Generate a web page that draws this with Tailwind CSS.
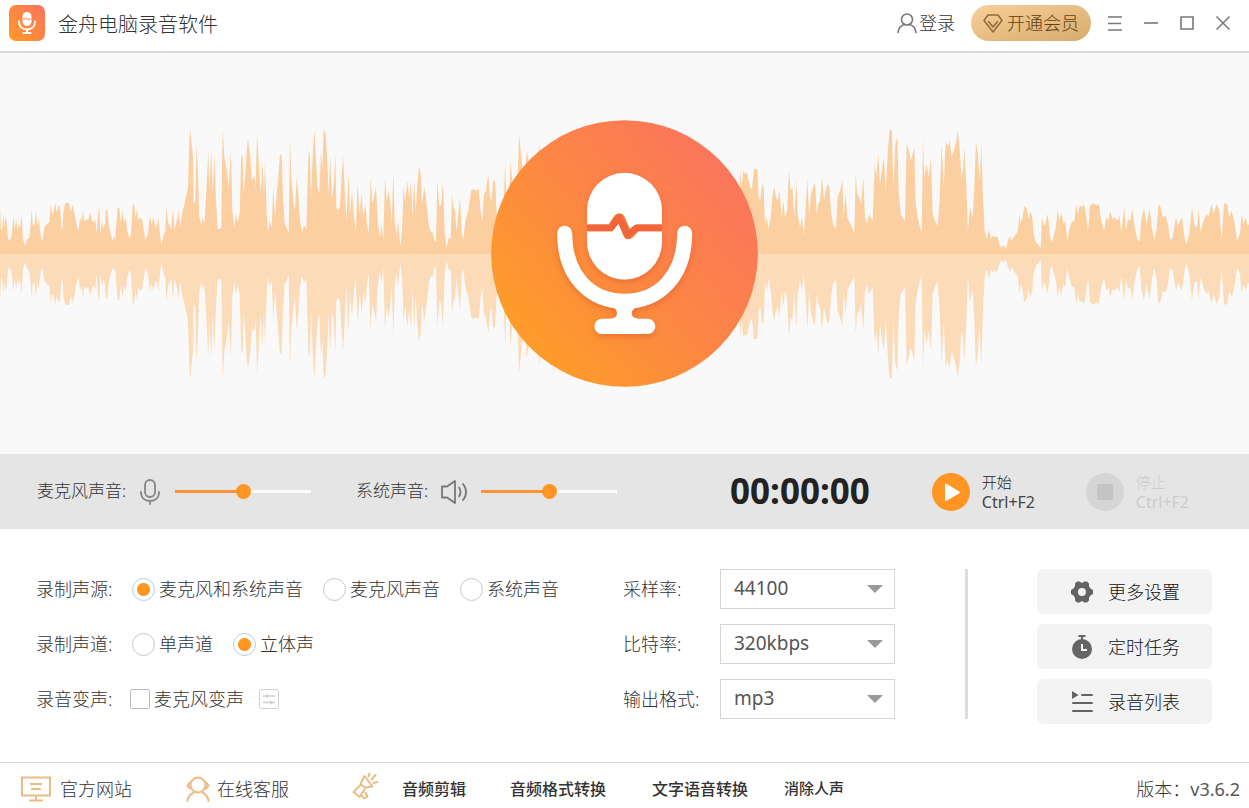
<!DOCTYPE html>
<html lang="zh-CN">
<head>
    <meta charset="UTF-8">
    <meta name="viewport" content="width=device-width, initial-scale=1.0">
    <title>金舟电脑录音软件</title>
    <script src="https://cdn.jsdelivr.net/npm/@tailwindcss/browser@4"></script>
</head>
<body class="flex flex-col min-h-screen bg-white text-[#333] text-lg font-light font-['Noto_Sans','Noto_Sans_CJK_SC',sans-serif]">

    <!-- Title bar -->
    <header class="flex items-center h-[53px] pl-[9px] pr-2 pb-[5px] border-b-2 border-[#dcdcdc]">
        <svg class="size-9 shrink-0" viewBox="0 0 36 36" fill="none">
            <defs>
                <linearGradient id="logoFill" x1="0" y1="1" x2="1" y2="0">
                    <stop offset="0" stop-color="#fd9a27"/>
                    <stop offset="1" stop-color="#fb7360"/>
                </linearGradient>
            </defs>
            <rect width="36" height="36" rx="7" fill="url(#logoFill)"/>
            <rect x="13.500" y="7" width="9" height="14" rx="4.500" fill="#fff"/>
            <path d="M13.500 14h3l1-1.200 1.500 2.200.8-1h2.700" stroke="#fb8046" stroke-width="1"/>
            <path d="M10 16.500c0 5 3.200 8 8 8s8-3 8-8M18 25v3M14.500 28h7" stroke="#fff" stroke-width="2" stroke-linecap="round"/>
        </svg>
        <h1 class="ml-[13px] pt-[3px] text-xl">金舟电脑录音软件</h1>

        <div class="flex items-center ml-auto">
            <button class="flex items-center gap-0.5">
                <svg class="w-5 h-[22px]" viewBox="0 0 20 22" fill="none" stroke="#777" stroke-width="1.600" stroke-linecap="round">
                    <circle cx="10" cy="7.500" r="5.500"/>
                    <path d="M1 20.500c.6-4.200 3-7 6.200-8M19 20.500c-.6-4.200-3-7-6.200-8"/>
                </svg>
                登录
            </button>
            <button class="flex items-center gap-1 h-9 ml-4 mr-1.5 px-3 rounded-full bg-linear-to-br from-[#f8d09a] to-[#d6ab6d] text-[#5f3f12]">
                <svg class="w-5 h-[19px]" viewBox="0 0 20 19" fill="none" stroke="#8f6a3a" stroke-width="1.500" stroke-linejoin="round" stroke-linecap="round">
                    <path d="M5 1h10l4 5.500-9 11.500L1 6.500z"/>
                    <path d="M5.500 7.500L10 13l4.500-5.500"/>
                </svg>
                开通会员
            </button>
            <button class="flex items-center justify-center size-9" aria-label="菜单">
                <svg class="size-4" viewBox="0 0 16 16" stroke="#777" stroke-width="1.600"><path d="M1 2h14M1 8.500h13M1 15h14"/></svg>
            </button>
            <button class="flex items-center justify-center size-9" aria-label="最小化">
                <svg class="size-4" viewBox="0 0 16 16" stroke="#777" stroke-width="1.600"><path d="M1 8h14"/></svg>
            </button>
            <button class="flex items-center justify-center size-9" aria-label="最大化">
                <svg class="size-4" viewBox="0 0 16 16" fill="none" stroke="#777" stroke-width="1.600"><path d="M2 2h12v12H2z"/></svg>
            </button>
            <button class="flex items-center justify-center size-9" aria-label="关闭">
                <svg class="size-4" viewBox="0 0 16 16" stroke="#777" stroke-width="1.500"><path d="M1.500 1.500l13 13M14.500 1.500l-13 13"/></svg>
            </button>
        </div>
    </header>

    <main class="flex flex-col flex-1">
        <!-- Waveform and microphone -->
        <section class="relative flex items-center justify-center h-[401px] bg-[#f9f9f9]">
            <svg class="w-full h-[260px]" viewBox="0 -390 3747 780" preserveAspectRatio="none" aria-hidden="true">
                <defs>
                    <g id="wave">
                        <polygon points="0,0 0,140 3,75 6,70 10,120 13,80 16,110 20,100 24,45 30,42 36,60 40,115 44,75 49,105 52,70 56,90 60,75 65,120 69,45 75,25 82,45 88,50 92,90 95,135 98,90 104,85 108,130 112,85 117,105 120,70 124,45 128,42 133,80 140,90 148,95 152,150 156,120 161,125 166,152 170,125 176,148 181,130 184,80 187,70 190,125 195,150 200,154 207,152 212,125 218,148 224,120 230,85 236,70 240,110 245,95 249,130 253,95 258,105 264,100 271,125 276,100 282,95 286,105 290,60 293,110 298,145 301,60 306,100 310,75 315,90 318,135 322,130 326,90 332,60 338,40 342,55 345,35 349,90 353,138 358,138 362,95 368,130 372,95 377,110 381,75 388,45 393,60 398,148 402,150 406,110 411,135 415,100 420,110 426,105 431,75 436,42 443,55 450,115 455,90 461,110 466,80 471,85 475,110 480,60 484,28 490,55 496,70 499,145 504,95 509,85 514,75 519,138 523,75 528,90 533,110 536,135 541,80 546,120 552,145 558,170 564,200 568,340 571,375 575,330 579,290 581,150 586,160 590,330 594,240 598,110 604,85 608,110 613,90 618,170 622,250 625,310 628,200 634,310 638,180 643,300 648,160 653,75 660,75 664,80 666,250 668,375 673,290 680,255 686,200 693,310 697,130 703,80 708,120 713,95 719,120 724,300 728,290 731,180 736,240 740,310 744,345 750,300 756,220 763,235 767,200 771,365 776,280 782,180 788,280 792,170 795,280 800,120 804,65 809,100 815,80 820,200 825,110 830,180 835,230 840,300 845,295 849,170 854,90 860,80 866,60 870,340 874,230 880,160 885,130 890,230 895,180 900,100 906,65 912,85 919,75 925,290 929,310 933,170 938,290 943,372 948,280 953,200 958,180 963,310 967,250 971,375 977,360 982,280 986,180 991,290 996,170 1001,200 1006,300 1009,140 1014,130 1020,140 1024,220 1029,295 1034,200 1039,100 1046,240 1050,120 1056,190 1062,110 1067,70 1073,210 1079,120 1085,180 1090,110 1096,150 1101,90 1106,60 1112,230 1117,150 1122,170 1128,200 1134,90 1140,50 1144,90 1150,40 1155,230 1160,160 1166,190 1171,150 1175,90 1180,250 1184,100 1190,55 1194,100 1201,25 1206,70 1211,200 1214,150 1214,0"/>
                        <polygon transform="translate(1200)" points="10,0 10,210 15,150 22,220 27,170 33,220 37,110 43,220 47,130 52,210 57,265 62,240 66,150 73,200 80,150 86,90 92,65 97,70 103,40 108,40 112,220 118,140 124,150 129,220 134,60 140,20 147,50 152,45 156,180 160,140 165,130 169,70 175,120 180,170 185,60 190,45 196,100 205,130 213,190 220,195 228,190 236,195 242,130 247,100 252,180 258,190 265,240 270,170 275,160 279,220 285,220 291,100 298,90 304,130 310,100 315,280 320,150 326,160 332,280 338,200 345,150 352,200 357,360 363,300 368,250 374,220 380,310 386,280 392,150 400,200 410,180 417,340 425,200 440,200 456,200 460,370 465,200 483,200 487,370 492,200 520,200 600,180 1024,180 1024,0"/>
                        <polygon transform="translate(2220)" points="0,0 0,255 5,200 10,250 16,240 21,245 26,220 31,200 36,195 42,255 52,255 56,170 61,160 66,210 71,200 75,85 80,110 86,75 92,110 98,180 103,200 108,170 113,160 119,190 125,110 130,160 135,110 141,130 147,250 152,190 157,200 163,110 169,225 173,120 180,80 186,110 191,55 196,120 202,225 208,110 213,180 219,200 225,215 230,120 235,150 240,160 246,230 252,160 257,190 262,210 268,200 273,130 279,90 288,75 293,170 300,190 307,220 311,110 317,180 322,110 329,95 336,80 343,65 347,240 352,180 358,170 363,150 370,230 375,110 381,90 387,120 392,110 398,100 404,270 409,230 415,300 420,210 427,260 432,290 437,190 443,300 449,375 456,370 460,200 466,330 472,350 476,190 482,120 488,110 495,100 500,330 507,310 512,280 518,300 523,320 527,150 533,110 540,80 545,60 549,350 553,230 560,270 566,230 573,290 578,120 585,100 593,80 599,170 605,330 611,200 617,340 623,320 629,340 635,290 641,310 647,330 653,370 659,320 664,230 669,250 673,320 679,200 684,70 690,140 698,110 703,200 708,340 713,300 719,220 724,330 729,170 734,70 740,45 747,75 753,45 758,55 764,50 771,55 778,30 784,18 790,28 797,15 803,35 809,55 815,40 821,50 828,60 834,70 838,120 842,90 848,110 853,145 860,135 866,105 872,130 877,110 881,60 888,35 895,28 902,18 906,110 911,90 916,85 921,120 926,100 930,50 936,35 942,60 948,80 953,135 958,100 964,125 970,90 976,100 982,40 988,75 995,95 1003,100 1009,150 1014,120 1020,145 1026,140 1032,150 1038,120 1044,70 1050,145 1058,152 1064,150 1070,145 1077,150 1083,105 1092,70 1099,110 1105,100 1111,130 1117,105 1125,110 1132,100 1138,115 1144,65 1153,140 1158,70 1164,105 1171,100 1177,135 1184,80 1192,45 1199,35 1205,110 1212,138 1219,90 1229,135 1236,75 1243,42 1250,75 1255,150 1262,140 1268,110 1277,115 1284,90 1290,42 1298,50 1308,110 1314,85 1326,110 1333,55 1339,28 1348,60 1356,140 1364,85 1371,80 1376,135 1382,65 1390,100 1400,120 1406,110 1414,150 1421,120 1430,150 1438,130 1445,42 1452,152 1462,150 1467,110 1475,130 1483,100 1491,40 1500,60 1505,120 1511,90 1517,110 1523,85 1527,90 1527,0"/>
                    </g>
                </defs>
                <use href="#wave" transform="scale(1 -1)" fill="#fbcfa0"/>
                <use href="#wave" fill="#fbdbb8"/>
            </svg>
            <svg class="absolute size-[267px]" viewBox="270 59 801 801" fill="none">
                <defs>
                    <linearGradient id="discFill" x1=".1" y1=".76" x2=".86" y2=".12">
                        <stop offset="0" stop-color="#fe9b2b"/>
                        <stop offset=".5" stop-color="#fc8645"/>
                        <stop offset="1" stop-color="#fb755c"/>
                    </linearGradient>
                    <filter id="micShadow" x="-20%" y="-20%" width="140%" height="140%">
                        <feDropShadow dx="0" dy="8" stdDeviation="9" flood-color="#d9531e" flood-opacity=".5"/>
                    </filter>
                </defs>
                <circle cx="670.500" cy="459.500" r="400" fill="url(#discFill)"/>
                <g filter="url(#micShadow)">
                    <path fill="#fff" d="M558 372V330a112.500 112.500 0 0 1 225 0v42h-77l-18 17-17-40c-7-14-23-13-31-3l-17 26zM558 393h75l19-25 15 38c5 13 20 14 29 5l17-18h70v32a112.500 112.500 0 0 1-225 0z"/>
                    <path stroke="#fff" stroke-width="45" stroke-linecap="round" d="M491 399C491 525 566 603 671 603S851 525 851 399"/>
                    <path fill="#fff" d="M618 612c26 10 30 18 30 27 0 10-8 16-22 16h-23a23 23 0 0 0 0 46h137a23 23 0 0 0 0-46h-26c-14 0-22-6-22-16 0-9 6-15 30-27z"/>
                </g>
                <path stroke="#f0663a" stroke-width="20" stroke-linejoin="round" d="M559 383H630L654 352L680 405L705 383H782"/>
            </svg>
        </section>

        <!-- Recording controls -->
        <section class="flex items-center h-[75px] pl-[37px] pr-[60px] bg-[#e5e5e5]">
            <label for="micVolume" class="w-[103px] text-[17px]">麦克风声音:</label>
            <svg class="w-5 h-[26px] shrink-0" viewBox="0 0 20 26" fill="none" stroke="#858585" stroke-width="1.800" stroke-linecap="round">
                <rect x="5" y="1" width="10" height="17" rx="5"/>
                <path d="M1 13c0 6 4 9 9 9s9-3 9-9M10 22v3"/>
            </svg>
            <input id="micVolume" type="range" value="50" class="appearance-none w-[136px] h-[3px] ml-[15px] bg-[linear-gradient(to_right,#fb9433_50%,#fff_50%)] [&::-webkit-slider-thumb]:appearance-none [&::-webkit-slider-thumb]:size-[15px] [&::-webkit-slider-thumb]:rounded-full [&::-webkit-slider-thumb]:bg-[#ff9523]">

            <label for="systemVolume" class="w-[85px] ml-[45px] text-[17px]">系统声音:</label>
            <svg class="w-[26px] h-6 shrink-0" viewBox="0 0 26 24" fill="none" stroke="#777" stroke-width="1.800" stroke-linecap="round" stroke-linejoin="round">
                <path d="M1 6.500h5L14 1v22l-8-5.500H1z"/>
                <path d="M18 7.500c2 2.500 2 6.500 0 9M22 4c4 4.500 4 11.500 0 16"/>
            </svg>
            <input id="systemVolume" type="range" value="50" class="appearance-none w-[136px] h-[3px] ml-[14px] bg-[linear-gradient(to_right,#fb9433_50%,#fff_50%)] [&::-webkit-slider-thumb]:appearance-none [&::-webkit-slider-thumb]:size-[15px] [&::-webkit-slider-thumb]:rounded-full [&::-webkit-slider-thumb]:bg-[#ff9523]">

            <time class="ml-[113px] mr-auto text-[35px] font-bold text-[#222]">00:00:00</time>

            <button class="flex items-center gap-3 w-[154px] text-left text-[15px] leading-5 text-[#222]">
                <svg class="size-[38px]" viewBox="0 0 38 38">
                    <circle cx="19" cy="19" r="19" fill="#ff9523"/>
                    <path d="M14 11.500v15.500L27 19.500z" fill="#fff" stroke="#fff" stroke-width="2" stroke-linejoin="round"/>
                </svg>
                <span>开始<br><span class="text-base leading-5 font-normal text-[#444]">Ctrl+F2</span></span>
            </button>
            <button disabled class="flex items-center gap-3 text-left text-[15px] leading-5 text-[#ccc]">
                <svg class="size-[38px]" viewBox="0 0 38 38">
                    <circle cx="19" cy="19" r="19" fill="#d5d5d5"/>
                    <rect x="11" y="11" width="16" height="16" rx="2" fill="#c4c4c4"/>
                </svg>
                <span>停止<br><span class="text-base leading-5 font-normal">Ctrl+F2</span></span>
            </button>
        </section>

        <!-- Settings -->
        <section class="flex pt-10 pb-[38px] pl-9 pr-[37px]">
            <div class="flex flex-col flex-1 gap-[15px]">
                <div class="flex items-center h-10" role="radiogroup" aria-labelledby="sourceLabel">
                    <span id="sourceLabel" class="w-24">录制声源:</span>
                    <div class="flex gap-5">
                        <label class="flex items-center gap-1"><input type="radio" name="source" checked class="appearance-none size-[23px] rounded-full border border-[#c8c8c8] checked:border-[#bccbe0] checked:bg-[radial-gradient(circle,#ff9523_6px,#fff_7px)]">麦克风和系统声音</label>
                        <label class="flex items-center gap-1"><input type="radio" name="source" class="appearance-none size-[23px] rounded-full border border-[#c8c8c8] checked:border-[#bccbe0] checked:bg-[radial-gradient(circle,#ff9523_6px,#fff_7px)]">麦克风声音</label>
                        <label class="flex items-center gap-1"><input type="radio" name="source" class="appearance-none size-[23px] rounded-full border border-[#c8c8c8] checked:border-[#bccbe0] checked:bg-[radial-gradient(circle,#ff9523_6px,#fff_7px)]">系统声音</label>
                    </div>
                </div>
                <div class="flex items-center h-10" role="radiogroup" aria-labelledby="channelLabel">
                    <span id="channelLabel" class="w-24">录制声道:</span>
                    <div class="flex gap-5">
                        <label class="flex items-center gap-1"><input type="radio" name="channel" class="appearance-none size-[23px] rounded-full border border-[#c8c8c8] checked:border-[#bccbe0] checked:bg-[radial-gradient(circle,#ff9523_6px,#fff_7px)]">单声道</label>
                        <label class="flex items-center gap-1"><input type="radio" name="channel" checked class="appearance-none size-[23px] rounded-full border border-[#c8c8c8] checked:border-[#bccbe0] checked:bg-[radial-gradient(circle,#ff9523_6px,#fff_7px)]">立体声</label>
                    </div>
                </div>
                <div class="flex items-center h-10">
                    <span class="w-[94px]">录音变声:</span>
                    <label class="flex items-center gap-1"><input type="checkbox" class="appearance-none size-5 rounded-xs border border-[#bbb] checked:bg-[#ff9523]">麦克风变声</label>
                    <button class="ml-[15px]" aria-label="变声设置">
                        <svg class="size-5" viewBox="0 0 20 20" fill="none" stroke="#cfcfcf">
                            <rect x=".5" y=".5" width="19" height="19" rx="2"/>
                            <path d="M4 7h12M4 13.500h12" stroke-width="1.300"/>
                            <path d="M9 4.500v5L6 7zM11 11v5l3-2.500z" fill="#cfcfcf" stroke="none"/>
                        </svg>
                    </button>
                </div>
            </div>

            <div class="flex flex-col gap-[15px] w-[272px]">
                <div class="flex items-center justify-between h-10">
                    <label for="sampleRate">采样率:</label>
                    <div class="grid items-center w-[175px] h-10">
                        <select id="sampleRate" class="col-start-1 row-start-1 appearance-none w-full h-10 pl-[13px] border border-[#d5d5d5] bg-white text-[19px] font-normal text-[#555]"><option>44100</option></select>
                        <svg class="col-start-1 row-start-1 justify-self-end mr-3 w-4 h-2 pointer-events-none" viewBox="0 0 16 8" fill="#999"><path d="M0 0h16L8 8z"/></svg>
                    </div>
                </div>
                <div class="flex items-center justify-between h-10">
                    <label for="bitRate">比特率:</label>
                    <div class="grid items-center w-[175px] h-10">
                        <select id="bitRate" class="col-start-1 row-start-1 appearance-none w-full h-10 pl-[13px] border border-[#d5d5d5] bg-white text-[19px] font-normal text-[#555]"><option>320kbps</option></select>
                        <svg class="col-start-1 row-start-1 justify-self-end mr-3 w-4 h-2 pointer-events-none" viewBox="0 0 16 8" fill="#999"><path d="M0 0h16L8 8z"/></svg>
                    </div>
                </div>
                <div class="flex items-center justify-between h-10">
                    <label for="outputFormat">输出格式:</label>
                    <div class="grid items-center w-[175px] h-10">
                        <select id="outputFormat" class="col-start-1 row-start-1 appearance-none w-full h-10 pl-[13px] border border-[#d5d5d5] bg-white text-[19px] font-normal text-[#555]"><option>mp3</option></select>
                        <svg class="col-start-1 row-start-1 justify-self-end mr-3 w-4 h-2 pointer-events-none" viewBox="0 0 16 8" fill="#999"><path d="M0 0h16L8 8z"/></svg>
                    </div>
                </div>
            </div>

            <div class="w-[3px] h-[150px] ml-[70px] mr-[69px] bg-[#dcdcdc]"></div>

            <div class="flex flex-col gap-2.5 w-[175px] text-[#111]">
                <button class="flex items-center gap-[14px] h-[45px] pl-[33px] rounded-md bg-[#f3f3f3]">
                    <svg class="size-6" viewBox="0 0 24 24" fill="#666462">
                        <path fill-rule="evenodd" d="M7 1.500h2.500L12 3l2.500-1.500H17L19 3.500V6l1.200 2.300L23 10v4l-2.800 1.700L19 18v2.500l-2 2h-2.500L12 21l-2.500 1.500H7l-2-2V18l-1.200-2.300L1 14v-4l2.800-1.700L5 6V3.500zM12 8a4 4 0 1 0 0 8 4 4 0 0 0 0-8z"/>
                    </svg>
                    更多设置
                </button>
                <button class="flex items-center gap-[14px] h-[45px] pl-[33px] rounded-md bg-[#f3f3f3]">
                    <svg class="size-6" viewBox="0 0 24 24" fill="none">
                        <path d="M8.500 1h7M12 1v4" stroke="#666462" stroke-width="2.200"/>
                        <circle cx="12" cy="14" r="10" fill="#666462"/>
                        <path d="M12 9v6h5" stroke="#fff" stroke-width="2"/>
                    </svg>
                    定时任务
                </button>
                <button class="flex items-center gap-[14px] h-[45px] pl-[33px] rounded-md bg-[#f3f3f3]">
                    <svg class="size-6" viewBox="0 0 24 24" stroke="#666462" stroke-width="2">
                        <path d="M12 5h10M3 13h19M3 21h19" stroke-linecap="round"/>
                        <path d="M2 1v8l6.500-4z" fill="#666462" stroke="none"/>
                    </svg>
                    录音列表
                </button>
            </div>
        </section>
    </main>

    <!-- Footer -->
    <footer class="flex items-center h-[46px] pt-1.5 pl-[21px] pr-[9px] border-t border-[#d5d5d5]">
        <a href="#" class="flex items-center gap-[9px]">
            <svg class="w-[30px] h-[26px]" viewBox="0 0 30 26" fill="none" stroke="#e9bd85" stroke-width="2">
                <path d="M1 1.500h28v18H1zM15 20v4M8 24.500h14M9 8h12M10 13h10"/>
            </svg>
            官方网站
        </a>
        <a href="#" class="flex items-center gap-[7px] ml-[54px]">
            <svg class="w-6 h-[26px]" viewBox="0 0 24 26" fill="none" stroke="#e9bd85" stroke-width="2" stroke-linecap="round">
                <circle cx="12" cy="9" r="7.500"/>
                <path d="M4 6.500L1.500 9.500 4 12.500M20 6.500l2.500 3-2.500 3M1.500 25c.5-4 3-7 6-8.500M22.500 25c-.5-4-3-7-6-8.500"/>
            </svg>
            在线客服
        </a>
        <svg class="w-[26px] h-7 ml-[63px] mb-1.5" viewBox="0 0 26 28" fill="none" stroke="#e9bd85" stroke-width="2" stroke-linecap="round" stroke-linejoin="round">
            <path d="M12.500 4l8 10.500-7.500 1-3-2-1-2.500zM9 12.500l-7.500 7.500 6 5 6-9M10 24l2 2.500 3.500-2-2-4"/>
            <path d="M16.500 4.500l1-3M19.500 7.500l4-4.500M21.500 11l3.500-1"/>
        </svg>
        <nav class="flex items-center ml-6 text-base font-medium text-[#333]">
            <a href="#">音频剪辑</a>
            <a href="#" class="ml-11">音频格式转换</a>
            <a href="#" class="ml-[46px]">文字语音转换</a>
            <a href="#" class="ml-9 text-[15px]">消除人声</a>
        </nav>
        <span class="ml-auto">版本：<span class="font-normal text-[#555]">v3.6.2</span></span>
    </footer>
</body>
</html>
